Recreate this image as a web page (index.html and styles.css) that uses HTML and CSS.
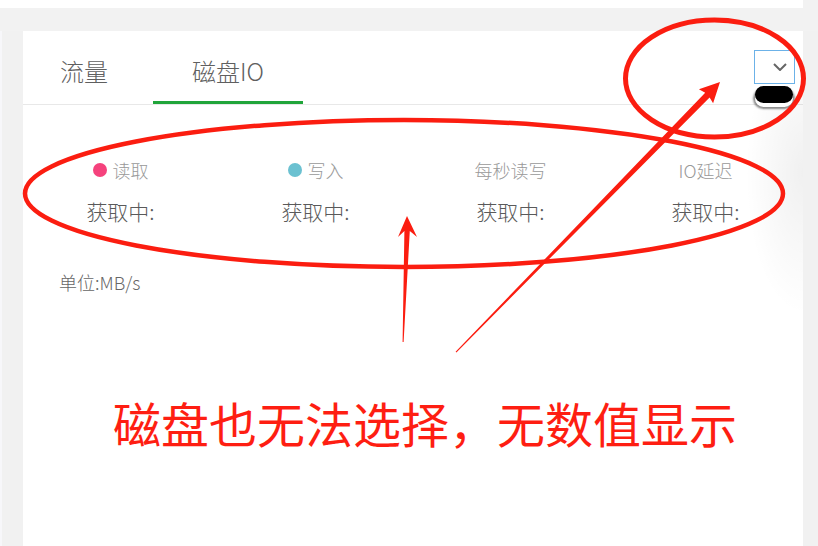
FILE: index.html
```html
<!DOCTYPE html>
<html lang="zh-CN">
<head>
<meta charset="utf-8">
<title>磁盘IO</title>
<link rel="stylesheet" href="styles.css">
</head>
<body>
<div class="topbar"></div>
<div class="main">
  <div class="gutter"></div>
  <div class="card">
    <div class="card-head">
      <div class="tabs">
        <div class="tab">流量</div>
        <div class="tab active">磁盘IO</div>
      </div>
      <div class="select">
        <svg width="14" height="8" viewBox="0 0 14 8"><path d="M1 1 L7 7 L13 1" fill="none" stroke="#666" stroke-width="2"/></svg>
      </div>
    </div>
    <div class="stats">
      <div class="stat">
        <div class="stat-label"><span class="dot dot-read"></span>读取</div>
        <div class="stat-value">获取中:</div>
      </div>
      <div class="stat">
        <div class="stat-label"><span class="dot dot-write"></span>写入</div>
        <div class="stat-value">获取中:</div>
      </div>
      <div class="stat">
        <div class="stat-label">每秒读写</div>
        <div class="stat-value">获取中:</div>
      </div>
      <div class="stat">
        <div class="stat-label">IO延迟</div>
        <div class="stat-value">获取中:</div>
      </div>
    </div>
    <div class="unit">单位:MB/s</div>
  </div>
  <div class="right-gutter"></div>
</div>

<div class="shade"></div>
<div class="pill"></div>

<svg class="annot" width="818" height="546" viewBox="0 0 818 546">
  <ellipse cx="404" cy="193.5" rx="379" ry="73.5" fill="none" stroke="#fb1d10" stroke-width="4.5"/>
  <ellipse cx="714.5" cy="78.5" rx="89" ry="58.5" fill="none" stroke="#fb1d10" stroke-width="5"/>
  <polygon fill="#fb1d10" points="407,216 417,237 409.8,231 403.6,342 402.6,342 404.4,231 398,237"/>
  <polygon fill="#fb1d10" points="720,82 713.1,103.3 709.6,97.4 456.4,352.5 455.6,351.7 705.2,92.8 698.9,89.3"/>
</svg>
<div class="note">磁盘也无法选择，无数值显示</div>
</body>
</html>
```

FILE: styles.css
```css
html, body {
  margin: 0;
  padding: 0;
}
body {
  width: 818px;
  height: 546px;
  overflow: hidden;
  background: #f2f2f2;
  font-family: "Noto Sans CJK SC", "Noto Sans", sans-serif;
  font-weight: 300;
  position: relative;
}
.topbar {
  width: 803px;
  height: 8px;
  background: #fff;
  margin-bottom: 23px;
}
.main {
  display: flex;
  height: 515px;
}
.gutter {
  width: 23px;
  box-sizing: border-box;
  border-left: 2px solid #f7f7fa;
  background: #f1f1f1;
}
.right-gutter {
  width: 15px;
  background: #f1f1f1;
}
.card {
  width: 780px;
  background: #fff;
}
.card-head {
  display: flex;
  justify-content: space-between;
  align-items: flex-start;
  height: 74px;
  box-sizing: border-box;
  border-bottom: 1px solid #e8e8e8;
}
.tabs {
  display: flex;
  padding-left: 37px;
}
.tab {
  height: 73px;
  box-sizing: border-box;
  padding-top: 8px;
  border-bottom: 3px solid transparent;
  display: flex;
  align-items: center;
  font-size: 24px;
  color: #5f5f5f;
  width: 93px;
}
.tab.active {
  width: 150px;
  justify-content: center;
  border-bottom-color: #20a53a;
}
.select {
  margin-top: 19px;
  margin-right: 8px;
  width: 41px;
  height: 34px;
  box-sizing: border-box;
  border: 1px solid #6cb2e8;
  background: #fff;
  display: flex;
  align-items: center;
  justify-content: flex-end;
  padding-right: 7px;
}
.select svg {
  display: block;
}
.stats {
  display: grid;
  grid-template-columns: repeat(4, 195px);
  padding-top: 53px;
}
.stat {
  display: flex;
  flex-direction: column;
  align-items: center;
}
.stat-label {
  display: flex;
  align-items: center;
  font-size: 18px;
  line-height: 24px;
  height: 24px;
  color: #999;
}
.dot {
  width: 14px;
  height: 14px;
  border-radius: 50%;
  margin-right: 6px;
}
.dot-read { background: #f5427d; }
.dot-write { background: #6bc1d1; }
.stat-value {
  margin-top: 14px;
  font-size: 21px;
  line-height: 30px;
  color: #5a5a5a;
}
.unit {
  margin-top: 44px;
  padding-left: 36px;
  font-size: 18px;
  line-height: 24px;
  color: #666;
}
.shade {
  position: absolute;
  left: 745px;
  top: 96px;
  width: 58px;
  height: 220px;
  background: radial-gradient(ellipse at 100% 35%, rgba(0,0,0,0.06), rgba(0,0,0,0) 70%);
  pointer-events: none;
}
.pill {
  position: absolute;
  left: 755px;
  top: 86px;
  width: 38px;
  height: 17px;
  border-radius: 9px;
  background: #000;
  box-shadow: 0 4px 0 #fff, 0 4px 2px 2px rgba(0,0,0,0.45);
}
.annot {
  position: absolute;
  left: 0;
  top: 0;
  pointer-events: none;
}
.note {
  position: absolute;
  left: 113px;
  top: 398px;
  font-size: 48px;
  font-weight: 400;
  line-height: 48px;
  color: #fe1e12;
  white-space: nowrap;
}
```
